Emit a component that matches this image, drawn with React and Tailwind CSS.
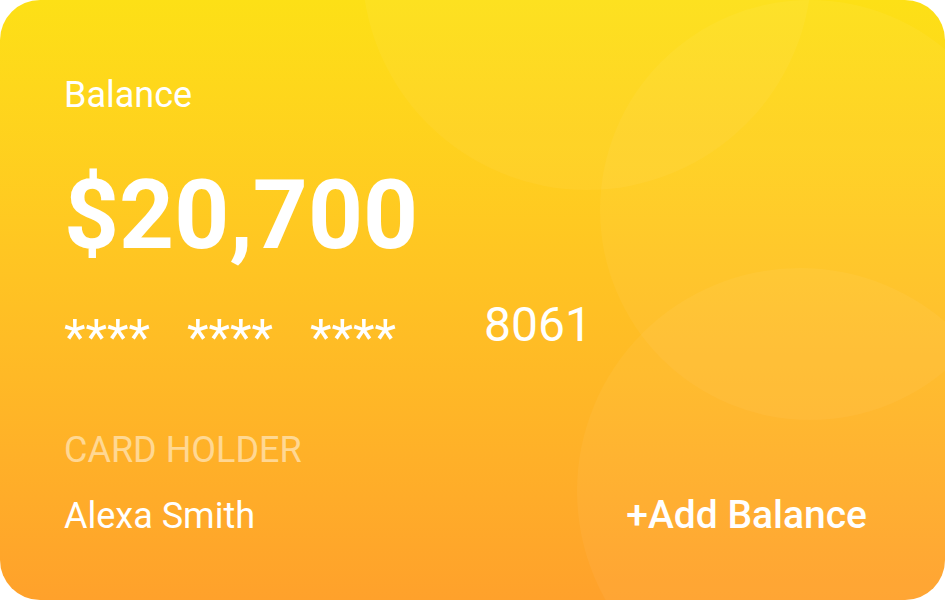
export default function App() {
  return (
    <div className="w-[945px] h-[600px] bg-white font-['Roboto',sans-serif]">
      <div className="relative w-[945px] h-[600px] overflow-hidden rounded-[40px] bg-linear-to-b from-[#fde016] to-[#ffa12b] text-white">
        <div className="absolute left-[362px] top-[-260px] w-[450px] h-[450px] rounded-full bg-white/[0.045]" />
        <div className="absolute left-[600px] top-[0px] w-[420px] h-[420px] rounded-full bg-white/[0.045]" />
        <div className="absolute left-[577px] top-[268px] w-[446px] h-[446px] rounded-full bg-white/[0.045]" />

        <div className="relative flex flex-col pl-[64px] pr-[78px] pt-[77px]">
          <div className="text-[36px] leading-[36px]">Balance</div>
          <div className="mt-[54px] text-[96px] leading-[96px] font-bold">$20,700</div>
          <div className="mt-[38px] flex items-start h-[48px] text-[48px] leading-[48px]">
            <span className="w-[123px] pt-[13px] text-[50px] leading-[48px]">****</span>
            <span className="w-[123px] pt-[13px] text-[50px] leading-[48px]">****</span>
            <span className="w-[174px] pt-[13px] text-[50px] leading-[48px]">****</span>
            <span>8061</span>
          </div>
          <div className="mt-[83px] text-[36px] leading-[36px] text-white/50">CARD HOLDER</div>
          <div className="mt-[29px] flex items-baseline justify-between">
            <span className="text-[36px] leading-[36px]">Alexa Smith</span>
            <span className="text-[39px] leading-[36px] font-medium">+Add Balance</span>
          </div>
        </div>
      </div>
    </div>
  );
}
